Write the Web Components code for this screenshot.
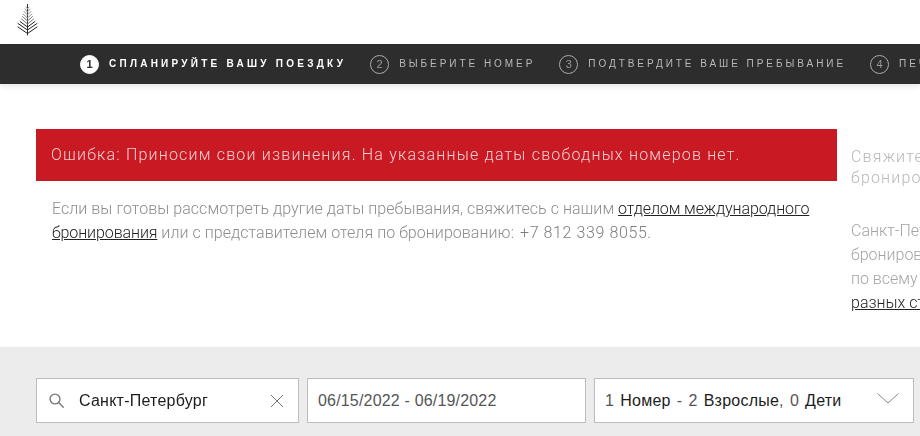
<!DOCTYPE html>
<html lang="ru">
<head>
<meta charset="utf-8">
<title>Бронирование</title>
<style>
  html, body { margin: 0; height: 436px; overflow: hidden; background: #fff; }
  body { font-family: Roboto, "Liberation Sans", sans-serif; width: 920px; }
  a { color: #222; }
</style>
</head>
<body>
<booking-page>
  <logo-header slot="header"></logo-header>
  <step-bar slot="steps">
    <step-item num="1" active>Спланируйте вашу поездку</step-item>
    <step-item num="2">Выберите номер</step-item>
    <step-item num="3">Подтвердите ваше пребывание</step-item>
    <step-item num="4">Печать подтверждения</step-item>
  </step-bar>
  <error-box slot="main">
    <span slot="message">Ошибка: Приносим свои извинения. На указанные даты свободных номеров нет.</span>
    Если вы готовы рассмотреть другие даты пребывания, свяжитесь с нашим <a href="#">отделом международного<br>бронирования</a> или с представителем отеля по бронированию: <b>+7 812 339 8055.</b>
  </error-box>
  <side-note slot="side">
    <span slot="lead">Свяжитесь с нами для<br>бронирования номеров</span>
    Санкт-Петербург<br>бронирование отелей<br>по всему миру в<br><a href="#">разных странах</a>
  </side-note>
  <search-bar slot="search">
    <search-field slot="place" clear>
      <svg slot="icon" width="15" height="15" viewBox="0 0 15 15" fill="none" stroke="#777" stroke-width="1.4"><circle cx="6" cy="6" r="4.900"/><path d="M9.600 9.600l5 5"/></svg>
      Санкт-Петербург
    </search-field>
    <search-field slot="dates" dates><i>06/15/2022 - 06/19/2022</i></search-field>
    <search-field slot="guests" chevron><i>1</i> Номер <i>- 2</i> Взрослые<i>, 0</i> Дети</search-field>
  </search-bar>
</booking-page>

<script>
class BookingPage extends HTMLElement {
  constructor() {
    super();
    this.attachShadow({ mode: 'open' }).innerHTML = `
      <style>
        /* opacity keeps the text on greyscale antialiasing, as in the reference */
        :host { display: flex; flex-direction: column; width: 920px; height: 436px; overflow: hidden; opacity: .999; }
        .content { display: grid; grid-template-columns: 801px 300px; column-gap: 14px; height: 263px; padding: 45px 0 0 36px; box-sizing: border-box; flex: none; }
        .search { flex: 1; background: #ececec; }
      </style>
      <slot name="header"></slot>
      <slot name="steps"></slot>
      <div class="content">
        <div><slot name="main"></slot></div>
        <div><slot name="side"></slot></div>
      </div>
      <div class="search"><slot name="search"></slot></div>
    `;
  }
}

class LogoHeader extends HTMLElement {
  constructor() {
    super();
    this.attachShadow({ mode: 'open' }).innerHTML = `
      <style>
        :host { display: flex; align-items: flex-start; height: 44px; padding: 4px 0 0 17px; box-sizing: border-box; background: #fff; }
        svg { display: block; }
      </style>
      <svg width="21" height="32" viewBox="0 0 21 32" fill="none" stroke-linecap="round">
        <path d="M10.500 0V31" stroke="#333" stroke-width="1"/>
        <path d="M10.500 5L9 3M10.500 5L12 3M10.500 8L8 5M10.500 8L13 5M10.500 11L7 7.500M10.500 11L14 7.500M10.500 14L6 10M10.500 14L15 10" stroke="#999" stroke-width="1"/>
        <path d="M10.500 17L5.500 12.500M10.500 17L15.500 12.500M10.500 20L4.500 15M10.500 20L16.500 15" stroke="#777" stroke-width="1"/>
        <path d="M10.500 23L3 17.500M10.500 23L18 17.500M10.500 26L1 19.500M10.500 26L20 19.500M10.500 29.500L1 23M10.500 29.500L20 23" stroke="#222" stroke-width="1"/>
      </svg>
    `;
  }
}

class StepBar extends HTMLElement {
  constructor() {
    super();
    this.attachShadow({ mode: 'open' }).innerHTML = `
      <style>
        :host { display: flex; gap: 24px; height: 40px; align-items: center; padding-left: 80px; background: #2d2d2d; box-shadow: 0 3px 6px rgba(0,0,0,.1); position: relative; flex: none; white-space: nowrap; }
      </style>
      <slot></slot>
    `;
  }
}

class StepItem extends HTMLElement {
  constructor() {
    super();
    this.attachShadow({ mode: 'open' }).innerHTML = `
      <style>
        :host { display: flex; align-items: center; gap: 10px; flex: none; color: #b9b9b9; font: 400 10px/1 "Liberation Sans", Arial, sans-serif; letter-spacing: 2.950px; text-transform: uppercase; }
        :host([active]) { color: #fff; font-weight: 700; letter-spacing: 3.250px; }
        .num { width: 19px; height: 19px; box-sizing: border-box; border: 1px solid #aaa; border-radius: 50%; display: flex; align-items: center; justify-content: center; letter-spacing: 0; font-weight: 400; font-size: 11px; color: #999; }
        :host([active]) .num { background: #fff; border-color: #fff; color: #2d2d2d; font-weight: 700; }
      </style>
      <span class="num">${this.getAttribute('num')}</span>
      <span><slot></slot></span>
    `;
  }
}

class ErrorBox extends HTMLElement {
  constructor() {
    super();
    this.attachShadow({ mode: 'open' }).innerHTML = `
      <style>
        :host { display: block; color: #8d8d8d; font: 300 16px/24px Roboto, "Liberation Sans", sans-serif; letter-spacing: .05px; }
        .message { display: flex; align-items: center; height: 52px; padding-left: 15px; background: #c91a23; color: #f3cfd0; letter-spacing: 1.200px; }
        .detail { padding: 16px 16px 0; }
        ::slotted(a) { letter-spacing: -.1px; }
        ::slotted(b) { font-weight: 300; letter-spacing: .6px; margin-left: 2px; color: #7d7d7d; }
      </style>
      <div class="message"><slot name="message"></slot></div>
      <div class="detail"><slot></slot></div>
    `;
  }
}

class SideNote extends HTMLElement {
  constructor() {
    super();
    this.attachShadow({ mode: 'open' }).innerHTML = `
      <style>
        :host { display: block; color: #a4a4a4; font: 300 16px/24px Roboto, "Liberation Sans", sans-serif; white-space: nowrap; }
        .lead { padding-top: 17px; line-height: 21px; letter-spacing: 1.200px; color: #b8b8b8; }
        .body { padding-top: 31px; }
      </style>
      <div class="lead"><slot name="lead"></slot></div>
      <div class="body"><slot></slot></div>
    `;
  }
}

class SearchBar extends HTMLElement {
  constructor() {
    super();
    this.attachShadow({ mode: 'open' }).innerHTML = `
      <style>
        :host { display: grid; grid-template-columns: 263px 279px 320px; column-gap: 8px; padding: 31px 0 0 36px; }
      </style>
      <slot name="place"></slot>
      <slot name="dates"></slot>
      <slot name="guests"></slot>
    `;
  }
}

class SearchField extends HTMLElement {
  constructor() {
    super();
    const icon = this.hasAttribute('clear')
      ? '<span class="icon"><slot name="icon"></slot></span>' : '';
    const closer = this.hasAttribute('clear')
      ? '<svg class="end" width="14" height="14" viewBox="0 0 14 14" fill="none" stroke="#777" stroke-width="1"><path d="M1 1l12 12M13 1L1 13"/></svg>' : '';
    const chevron = this.hasAttribute('chevron')
      ? '<svg class="end chev" width="22" height="11" viewBox="0 0 22 11" fill="none" stroke="#888" stroke-width="1"><path d="M.5 .5l10.500 9.500L21.500 .5"/></svg>' : '';
    this.attachShadow({ mode: 'open' }).innerHTML = `
      <style>
        :host { display: flex; align-items: center; height: 45px; box-sizing: border-box; background: #fff; border: 1px solid #bdbdbd; padding: 0 14px 0 10px; color: #1c1c1c; font: 400 16px/1 "Liberation Sans", Arial, sans-serif; letter-spacing: .24px; white-space: nowrap; }
        :host([clear]) { padding-left: 12px; }
        :host([chevron]) { word-spacing: 1.400px; }
        :host([dates]) { letter-spacing: .18px; }
        .icon { display: flex; margin-right: 15px; }
        .text { flex: 1; }
        .end { flex: none; }
        .chev { margin-top: -5px; }
        ::slotted(i) { font-style: normal; color: #555; }
      </style>
      ${icon}
      <span class="text"><slot></slot></span>
      ${closer}${chevron}
    `;
  }
}

customElements.define('booking-page', BookingPage);
customElements.define('logo-header', LogoHeader);
customElements.define('step-bar', StepBar);
customElements.define('step-item', StepItem);
customElements.define('error-box', ErrorBox);
customElements.define('side-note', SideNote);
customElements.define('search-bar', SearchBar);
customElements.define('search-field', SearchField);
</script>
</body>
</html>
